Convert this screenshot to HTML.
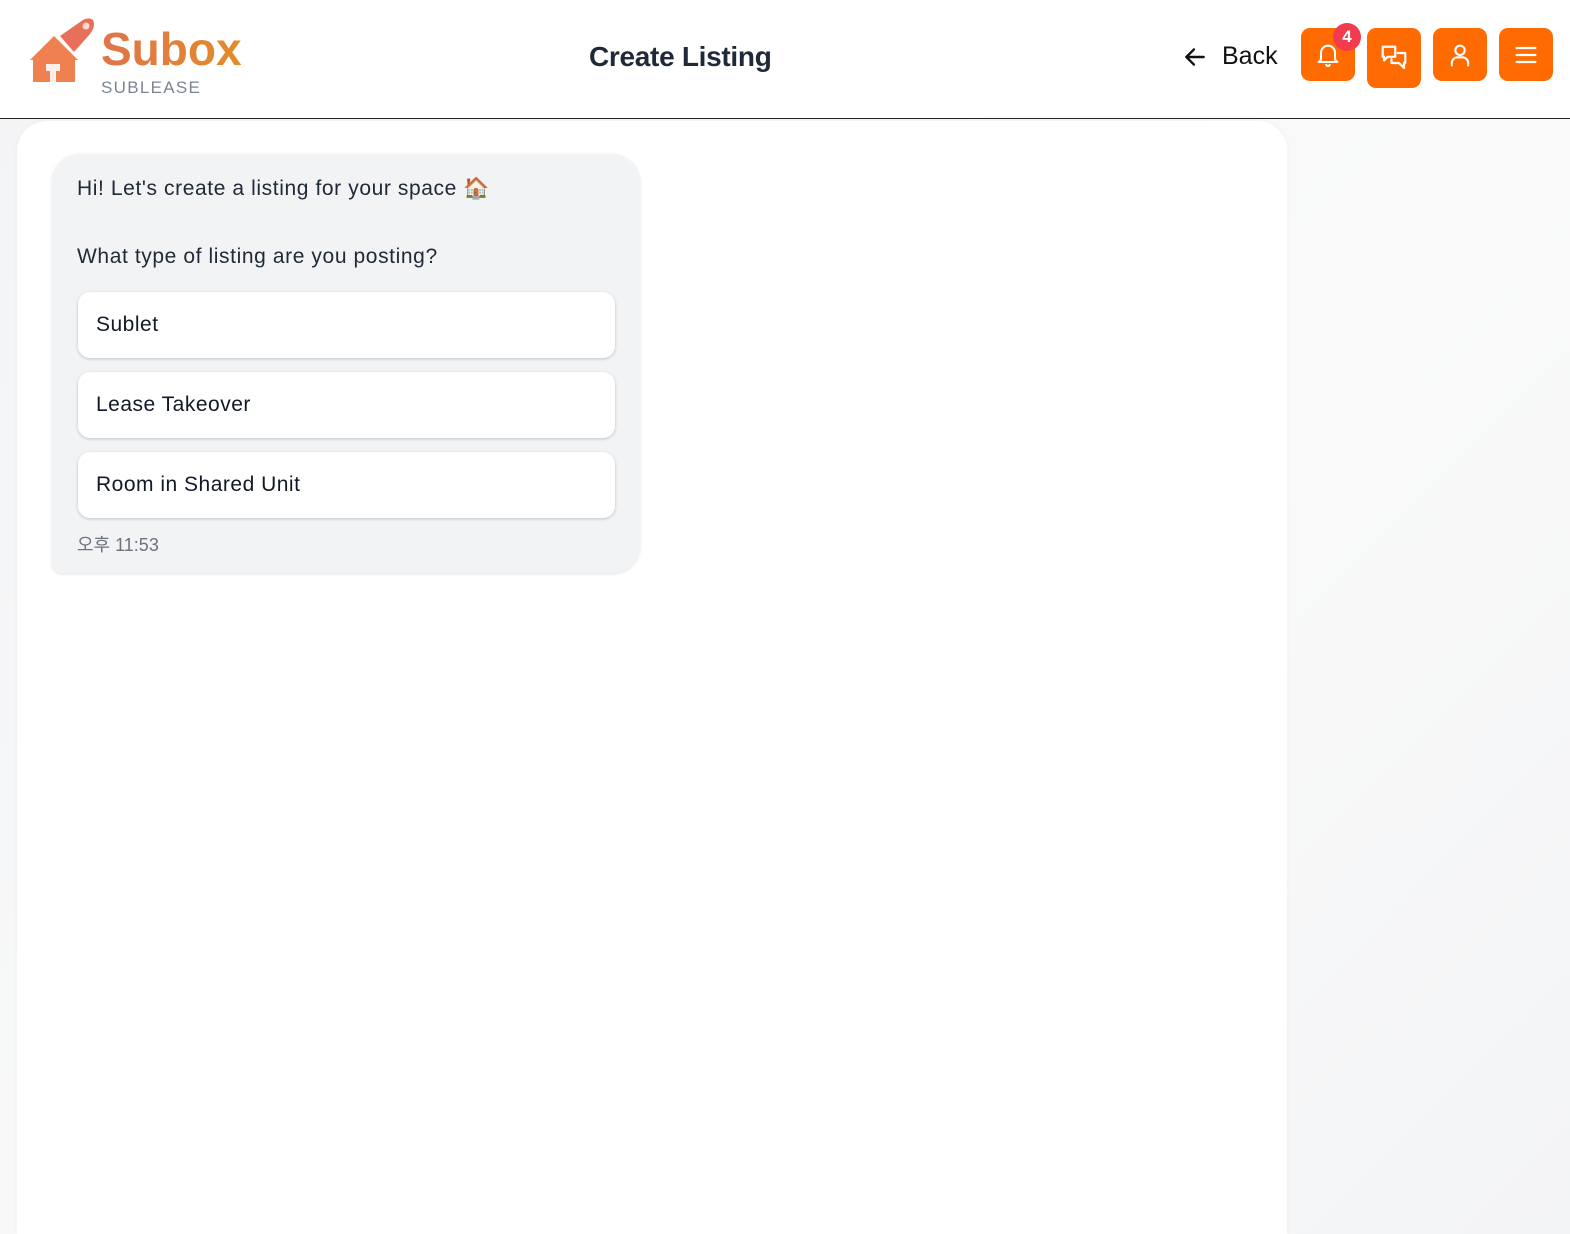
<!DOCTYPE html>
<html><head><meta charset="utf-8"><style>
*{box-sizing:border-box;margin:0;padding:0}
html,body{width:1570px;height:1234px;overflow:hidden}
body{background:linear-gradient(135deg,#f3f4f6,#fafafa 60%,#f3f4f6);font-family:"Liberation Sans","Noto Sans CJK KR",sans-serif;position:relative}
.hdr{position:absolute;left:0;top:0;width:1570px;height:119px;background:#fff;border-bottom:1px solid #222}
.logo-t{position:absolute;left:101px;top:22px;font-size:46px;font-weight:bold;background:linear-gradient(90deg,#e0744a,#e38c2a);-webkit-background-clip:text;color:transparent}
.logo-s{position:absolute;left:101px;top:78px;font-size:17px;color:#7b8494;letter-spacing:1.3px}
.title{position:absolute;left:589px;top:41px;font-size:28px;font-weight:bold;color:#1f2937;letter-spacing:-0.3px}
.back{position:absolute;left:1182px;top:42px;font-size:25px;color:#111;display:flex;align-items:center;gap:14px}
.btn{position:absolute;top:28px;width:54px;height:53px;background:#ff6b00;border-radius:9px;display:flex;align-items:center;justify-content:center}
.badge{position:absolute;left:1333px;top:23px;width:28px;height:28px;border-radius:50%;background:#f23b4c;color:#fff;font-size:17px;font-weight:bold;text-align:center;line-height:28px}
.card{position:absolute;left:17px;top:121px;width:1270px;height:1113px;background:#fff;border-radius:30px 30px 0 0;box-shadow:0 0 6px rgba(0,0,0,.04)}
.bub{position:absolute;left:52px;top:154px;width:588px;height:419px;background:#f2f3f5;border-radius:28px 28px 28px 10px;box-shadow:0 1px 3px rgba(0,0,0,.12)}
.t{position:absolute;left:77px;font-size:21px;color:#1f2937;letter-spacing:0.6px}
.opt{position:absolute;left:78px;width:537px;height:66px;background:#fff;border-radius:12px;box-shadow:0 1px 3px rgba(0,0,0,.2);font-size:21px;color:#111827;padding-left:18px;line-height:66px;letter-spacing:0.5px}
.time{position:absolute;left:77px;top:531px;font-size:18px;color:#6b7280}
</style></head><body>
<div class="hdr">
<svg style="position:absolute;left:28px;top:14px" width="68" height="70" viewBox="0 0 68 70">
<path d="M32 22 L52 8 Q60 2 65 6 Q68 12 62 20 L46 38 Z" fill="#e8705a"/>
<circle cx="58" cy="12" r="3.5" fill="#fbd9d0"/>
<path d="M2 46 L26 22 L50 46 L47 46 L47 68 L5 68 L5 46 Z" fill="#ef8050"/>
<rect x="18" y="50" width="14" height="7" fill="#fdf0ea"/><rect x="22" y="56" width="6" height="12" fill="#fdf0ea"/>
</svg>
<div class="logo-t">Subox</div><div class="logo-s">SUBLEASE</div>
<div class="title">Create Listing</div>
<div class="back"><svg width="26" height="26" viewBox="0 0 24 24" fill="none" stroke="#111" stroke-width="2.2" stroke-linecap="round" stroke-linejoin="round"><path d="M20 12H4M11 5l-7 7 7 7"/></svg>Back</div>
<div class="btn" style="left:1301px"><svg width="28" height="28" viewBox="0 0 24 24" fill="none" stroke="#fff" stroke-width="1.8" stroke-linecap="round" stroke-linejoin="round"><path d="M6 16V10a6 6 0 0112 0v6l2 2H4z"/><path d="M10.5 20.5a1.7 1.7 0 003 0"/></svg></div>
<div class="btn" style="left:1367px;height:60px"><svg width="30" height="30" viewBox="0 0 24 24" fill="none" stroke="#fff" stroke-width="1.8" stroke-linecap="round" stroke-linejoin="round"><path d="M3 3h10v8H7l-3 3V11H3z"/><path d="M15 8h6v8h-1v4l-4-4h-6v-3"/></svg></div>
<div class="btn" style="left:1433px"><svg width="28" height="28" viewBox="0 0 24 24" fill="none" stroke="#fff" stroke-width="1.8" stroke-linecap="round"><circle cx="12" cy="8" r="4"/><path d="M5 21v-2a5 5 0 015-5h4a5 5 0 015 5v2"/></svg></div>
<div class="btn" style="left:1499px"><svg width="28" height="28" viewBox="0 0 24 24" fill="none" stroke="#fff" stroke-width="2" stroke-linecap="round"><path d="M4 6h16M4 12h16M4 18h16"/></svg></div>
<div class="badge">4</div>
</div>
<div class="card"></div>
<div class="bub"></div>
<div class="t" style="top:177px">Hi! Let's create a listing for your space 🏠</div>
<div class="t" style="top:245px">What type of listing are you posting?</div>
<div class="opt" style="top:292px">Sublet</div>
<div class="opt" style="top:372px">Lease Takeover</div>
<div class="opt" style="top:452px">Room in Shared Unit</div>
<div class="time">오후 11:53</div>
</body></html>
